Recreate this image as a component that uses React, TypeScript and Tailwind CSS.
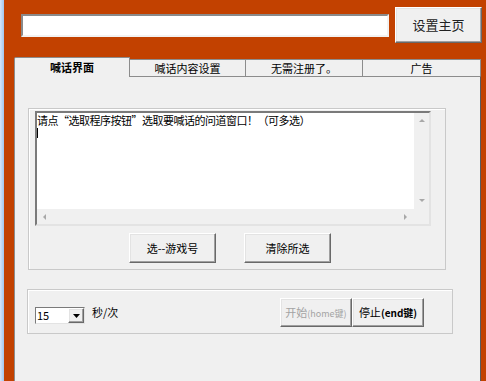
const cjk = { fontFamily: '"SimSun", "Noto Sans CJK SC", "Liberation Sans", sans-serif' }

const raised =
  'bg-[#f0f0f0] border border-t-white border-l-white border-r-[#696969] border-b-[#696969] shadow-[inset_-1px_-1px_0_#a0a0a0,inset_1px_1px_0_#e3e3e3]'

const Tab = ({ label, width, active }: { label: string; width: number; active?: boolean }) => (
  <div
    className={
      active
        ? 'relative z-10 -mb-px h-[20px] flex items-center justify-center bg-[#f0f0f0] border border-b-0 border-[#8c8c8c] rounded-tl-[2px] text-[11px] font-bold text-black'
        : 'h-[17px] flex items-center justify-center bg-[#f0f0f0] border border-b-0 border-l-0 border-[#8c8c8c] text-[11px] text-black'
    }
    style={{ width }}
  >
    {label}
  </div>
)

const Arrow = ({ dir }: { dir: 'up' | 'down' | 'left' | 'right' }) => {
  const pts = {
    up: '0,4 3,1 6,4',
    down: '0,1 3,4 6,1',
    left: '4,0 1,3 4,6',
    right: '1,0 4,3 1,6',
  }[dir]
  return (
    <svg width="6" height="6" viewBox="0 0 6 6">
      <polygon points={pts} fill="#a8a8a8" />
    </svg>
  )
}

export default function App() {
  return (
    <div className="w-[486px] h-[381px] overflow-hidden flex bg-[#c24100]" style={cjk}>
      {/* window border */}
      <div className="w-[4px] h-full bg-gradient-to-r from-[#d6e6f7] to-[#a3c6ec]" />

      <div className="flex-1 flex flex-col pl-[10px] pr-[5px]">
        {/* header */}
        <div className="h-[57px] flex items-start shrink-0">
          <div className="ml-[7px] mt-[14px] w-[368px] h-[23px] bg-white border-2 border-t-[#8a8a8a] border-l-[#8a8a8a] border-r-[#f2f2f2] border-b-[#f2f2f2]" />
          <button className={`ml-[6px] mt-[7px] w-[87px] h-[36px] -mr-px text-[13px] text-[#222] ${raised}`}>
            设置主页
          </button>
        </div>

        {/* tabs */}
        <div className="h-[19px] flex items-end shrink-0">
          <Tab label="喊话界面" width={116} active />
          <Tab label="喊话内容设置" width={116} />
          <Tab label="无需注册了。" width={117} />
          <Tab label="广告" width={118} />
        </div>

        {/* tab page */}
        <div className="flex-1 bg-[#f0f0f0] border border-b-0 border-[#8c8c8c] border-r-[#5a5a5a] flex flex-col">
          {/* group 1 */}
          <div className="mt-[31px] ml-[13px] w-[418px] h-[162px] border border-[#c9c9c9] shadow-[inset_1px_1px_0_#ffffff] flex flex-col">
            <div className="mt-[2px] ml-[6px] w-[396px] h-[115px] bg-white border-2 border-t-[#7a7a7a] border-l-[#7a7a7a] border-r-[#e3e3e3] border-b-[#e3e3e3] flex flex-col">
              <div className="flex-1 flex min-h-0">
                <div className="flex-1 pt-[1px] text-[11px] leading-[13px] tracking-[-0.5px] text-black">
                  <div>请点“选取程序按钮”选取要喊话的问道窗口！（可多选）</div>
                  <div className="mt-[1px] w-px h-[10px] bg-black" />
                </div>
                <div className="w-[15px] bg-[#f0f0f0] flex flex-col items-center justify-between py-[5px]">
                  <Arrow dir="up" />
                  <Arrow dir="down" />
                </div>
              </div>
              <div className="h-[15px] flex">
                <div className="flex-1 bg-[#f0f0f0] flex items-center justify-between px-[5px]">
                  <Arrow dir="left" />
                  <Arrow dir="right" />
                </div>
                <div className="w-[15px] bg-[#f0f0f0]" />
              </div>
            </div>
            <div className="mt-[7px] ml-[100px] flex gap-[28px]">
              <button className={`w-[87px] h-[30px] text-[11px] text-black ${raised}`}>选--游戏号</button>
              <button className={`w-[87px] h-[30px] text-[11px] text-black ${raised}`}>清除所选</button>
            </div>
          </div>

          {/* group 2 */}
          <div className="mt-[19px] ml-[12px] w-[426px] h-[45px] border border-[#c9c9c9] shadow-[inset_1px_1px_0_#ffffff] flex items-start">
            <div className="ml-[7px] mt-[17px] w-[50px] h-[17px] bg-white border border-t-[#7a7a7a] border-l-[#7a7a7a] border-r-[#e3e3e3] border-b-[#e3e3e3] flex">
              <div className="flex-1 pl-[1px] text-[11px] leading-[15px] text-black">15</div>
              <div className={`w-[16px] h-full flex items-center justify-center ${raised}`}>
                <svg width="7" height="4" viewBox="0 0 7 4">
                  <polygon points="0,0 7,0 3.5,4" fill="#000" />
                </svg>
              </div>
            </div>
            <div className="ml-[7px] mt-[16px] text-[11px] leading-[13px] text-black">秒/次</div>
            <div className="ml-auto mr-[28px] mt-[8px] flex">
              <button className={`w-[72px] h-[29px] text-[11px] text-[#a3a3a3] ${raised}`}>
                开始<span className="text-[9px]">(home键)</span>
              </button>
              <button className={`w-[72px] h-[29px] text-[11px] text-black ${raised}`}>
                停止<span className="text-[10px] font-bold">(end键)</span>
              </button>
            </div>
          </div>
        </div>
      </div>
    </div>
  )
}
